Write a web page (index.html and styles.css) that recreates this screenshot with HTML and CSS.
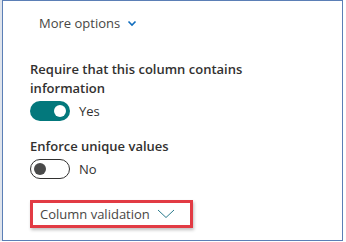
FILE: index.html
```html
<!DOCTYPE html>
<html>
<head>
<meta charset="utf-8">
<link rel="stylesheet" href="styles.css">
</head>
<body>
<div class="strip">
  <div class="frame">
    <div class="more">
      <span>More options</span>
      <svg class="chev-small" width="10" height="7" viewBox="0 0 10 7"><path d="M1.5 1.5 L5 5 L8.5 1.5" fill="none" stroke="#0f6cbd" stroke-width="1.6"/></svg>
    </div>
    <div class="field first">
      <div class="label">Require that this column contains information</div>
      <div class="toggle-row">
        <span class="toggle on"><span class="knob"></span></span>
        <span class="tval">Yes</span>
      </div>
    </div>
    <div class="field second">
      <div class="label">Enforce unique values</div>
      <div class="toggle-row">
        <span class="toggle off"><span class="knob"></span></span>
        <span class="tval">No</span>
      </div>
    </div>
    <div class="validation">
      <span>Column validation</span>
      <svg width="18" height="10" viewBox="0 0 18 10"><path d="M1 1 L9 8.5 L17 1" fill="none" stroke="#2a7a8c" stroke-width="1"/></svg>
    </div>
  </div>
</div>
</body>
</html>
```

FILE: styles.css
```css
html, body {
  margin: 0;
  padding: 0;
  background: #ffffff;
}
body {
  font-family: "Open Sans", "Noto Sans", sans-serif;
  color: #323130;
}
.strip {
  width: 343px;
  height: 241px;
  border-left: 2px solid #dfe4ec;
}
.frame {
  box-sizing: border-box;
  width: 341px;
  height: 241px;
  border: 1px solid #5b7fb6;
  padding: 0 0 0 27px;
}
.more {
  display: flex;
  align-items: center;
  gap: 7px;
  margin-top: 12px;
  padding-left: 9px;
  font-size: 13px;
  line-height: 20px;
  color: #484644;
}
.chev-small { margin-top: 1px; }
.field.first { margin-top: 27px; }
.field.second { margin-top: 16px; }
.label {
  font-size: 13px;
  font-weight: 600;
  line-height: 19px;
  width: 230px;
}
.toggle-row {
  display: flex;
  align-items: center;
  gap: 9px;
  margin-top: 3px;
  height: 20px;
}
.toggle {
  box-sizing: border-box;
  width: 40px;
  height: 20px;
  border-radius: 10px;
  display: flex;
  align-items: center;
  padding: 0 4px;
}
.toggle.on {
  background: #03787c;
  justify-content: flex-end;
}
.toggle.off {
  border: 1px solid #323130;
  background: #fff;
  justify-content: flex-start;
  padding: 0 3px;
}
.knob {
  width: 12px;
  height: 12px;
  border-radius: 50%;
}
.toggle.on .knob { background: #fff; }
.toggle.off .knob { background: #4a4a4a; }
.tval {
  font-size: 13px;
  color: #323130;
}
.validation {
  box-sizing: border-box;
  display: flex;
  align-items: center;
  gap: 7px;
  width: 163px;
  height: 28px;
  margin-top: 21px;
  border: 3px solid #e23b44;
  padding-left: 7px;
  font-size: 13px;
  color: #484644;
  box-shadow: 1px 2px 3px rgba(0,0,0,0.25);
}
.validation svg { margin-top: -1px; }
```
